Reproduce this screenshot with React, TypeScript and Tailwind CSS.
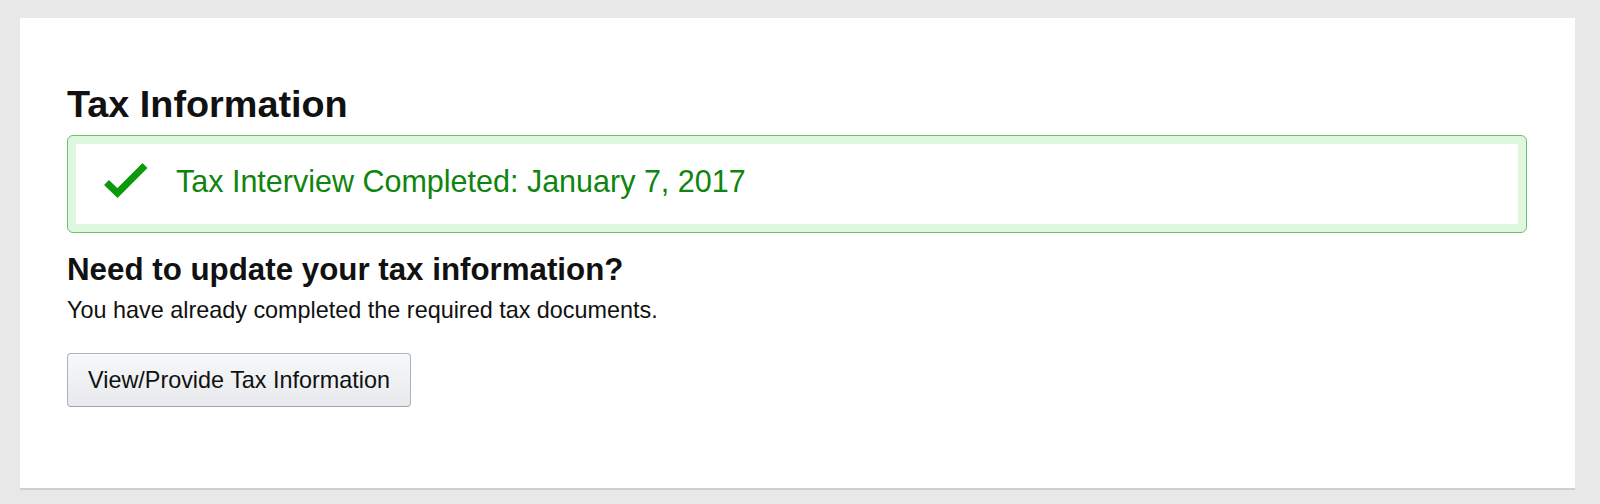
import * as React from "react";

const font = { fontFamily: '"Liberation Sans", Arial, Helvetica, sans-serif' };

function CheckIcon() {
  return (
    <svg width="46" height="38" viewBox="0 0 46 38" fill="none" aria-hidden="true">
      <polyline
        points="3.5,20.5 14.5,31 42,3.5"
        stroke="#0c9a0c"
        strokeWidth="7"
        strokeLinecap="butt"
        strokeLinejoin="miter"
      />
    </svg>
  );
}

export default function App() {
  return (
    <div className="min-h-[504px] bg-[#e8e8e8] pt-[18px] pl-[20px] pr-[25px]" style={font}>
      <div className="bg-white pt-[66px] pb-[81px] pl-[47px] pr-[48px] shadow-[0_2px_0_#cfcfcf]">
        <h1 className="text-[37.8px] font-bold leading-[40px] text-[#111]">Tax Information</h1>

        <div className="mt-[11px] rounded-[6px] border border-[#6fc16f] bg-[#dff7df] p-[8px]">
          <div className="flex h-[80px] items-start bg-white pl-[27px] pt-[18px]">
            <CheckIcon />
            <span className="ml-[27px] mt-[2px] text-[30.5px] leading-[34px] text-[#0f840f]">
              Tax Interview Completed: January 7, 2017
            </span>
          </div>
        </div>

        <h2 className="mt-[20px] text-[31.3px] font-bold leading-[34px] text-[#111]">
          Need to update your tax information?
        </h2>
        <p className="mt-[9px] text-[23.4px] leading-[28px] text-[#111]">
          You have already completed the required tax documents.
        </p>

        <button
          type="button"
          className="mt-[29px] rounded-[4px] border border-[#adb1b8] border-b-[#a2a6ac] bg-gradient-to-b from-[#f7f8fa] to-[#e7e9ec] px-[20px] py-[12px] text-[23.4px] leading-[28px] text-[#111] shadow-[inset_0_1px_0_rgba(255,255,255,0.6)]"
        >
          View/Provide Tax Information
        </button>
      </div>
    </div>
  );
}
